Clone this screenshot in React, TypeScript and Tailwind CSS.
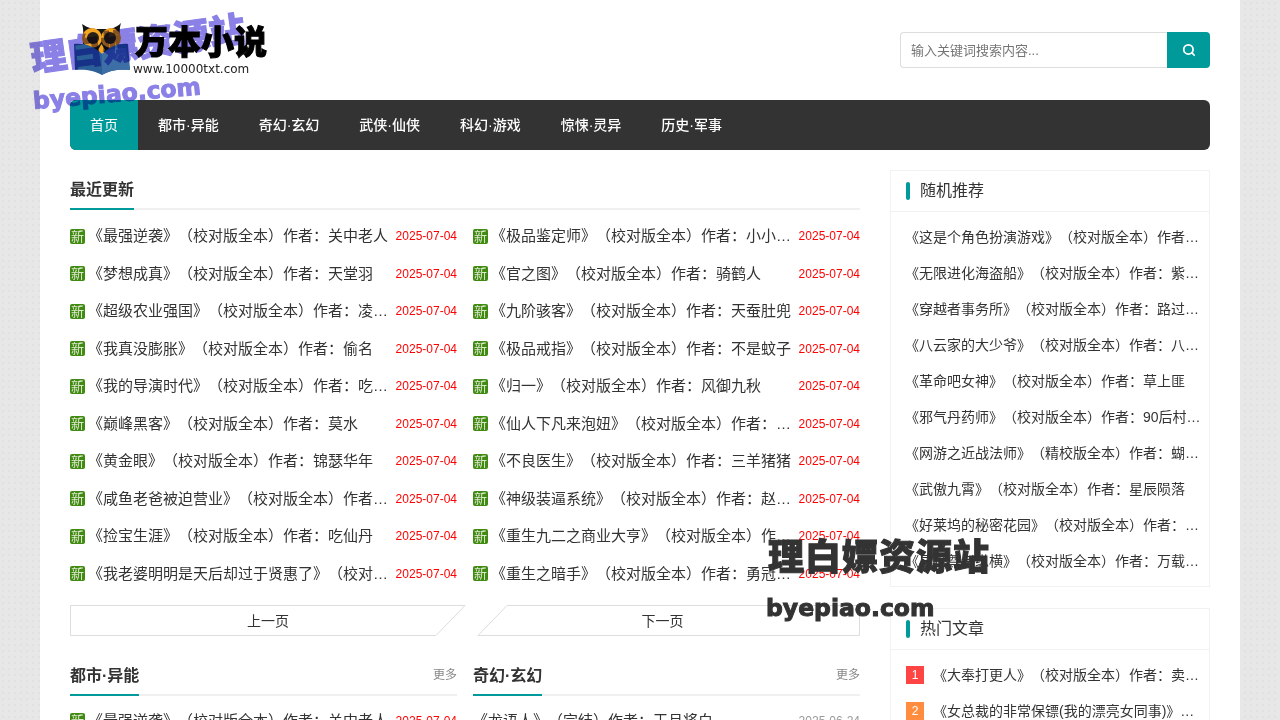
import React from 'react';
import { Search } from 'lucide-react';

const font = 'font-["Liberation_Sans","Noto_Sans_CJK_SC",sans-serif]';

const navItems = ['都市·异能', '奇幻·玄幻', '武侠·仙侠', '科幻·游戏', '惊悚·灵异', '历史·军事'];

const recent: [string, string][] = [
  ['《最强逆袭》（校对版全本）作者：关中老人', '《极品鉴定师》（校对版全本）作者：小小小小小'],
  ['《梦想成真》（校对版全本）作者：天堂羽', '《官之图》（校对版全本）作者：骑鹤人'],
  ['《超级农业强国》（校对版全本）作者：凌晨晨晨', '《九阶骇客》（校对版全本）作者：天蚕肚兜'],
  ['《我真没膨胀》（校对版全本）作者：偷名', '《极品戒指》（校对版全本）作者：不是蚊子'],
  ['《我的导演时代》（校对版全本）作者：吃吃吃吃', '《归一》（校对版全本）作者：风御九秋'],
  ['《巅峰黑客》（校对版全本）作者：莫水', '《仙人下凡来泡妞》（校对版全本）作者：作者名字'],
  ['《黄金眼》（校对版全本）作者：锦瑟华年', '《不良医生》（校对版全本）作者：三羊猪猪'],
  ['《咸鱼老爸被迫营业》（校对版全本）作者：作者名', '《神级装逼系统》（校对版全本）作者：赵赵赵赵'],
  ['《捡宝生涯》（校对版全本）作者：吃仙丹', '《重生九二之商业大亨》（校对版全本）作者：作者'],
  ['《我老婆明明是天后却过于贤惠了》（校对版全本）', '《重生之暗手》（校对版全本）作者：勇冠三军军'],
];

const random = [
  '《这是个角色扮演游戏》（校对版全本）作者：作者名',
  '《无限进化海盗船》（校对版全本）作者：紫色紫色紫色',
  '《穿越者事务所》（校对版全本）作者：路过路过路过',
  '《八云家的大少爷》（校对版全本）作者：八云八云',
  '《革命吧女神》（校对版全本）作者：草上匪',
  '《邪气丹药师》（校对版全本）作者：90后村长长长',
  '《网游之近战法师》（精校版全本）作者：蝴蝶蓝蓝蓝',
  '《武傲九霄》（校对版全本）作者：星辰陨落',
  '《好莱坞的秘密花园》（校对版全本）作者：作者名字',
  '《异世尊者纵横》（校对版全本）作者：万载万载万载',
];

const Dated = ({ text, date }: { text: string; date: string }) => (
  <li className="flex h-[37.5px] items-center">
    <span className="mr-[3px] flex h-[15px] w-[15px] shrink-0 items-center justify-center rounded-[2px] bg-[#3f8a10] text-[13px] leading-none text-[#dfe8d0]">
      新
    </span>
    <span className="min-w-0 flex-1 truncate text-[15px] text-[#333]">{text}</span>
    <span className="ml-[7px] shrink-0 text-xs text-[#f00]">{date}</span>
  </li>
);

const SectionTitle = ({ title, more }: { title: string; more?: boolean }) => (
  <div className="flex h-[40px] items-start justify-between border-b-2 border-[#f0f0f0]">
    <h3 className="-mb-[2px] h-[40px] border-b-2 border-[#009a9a] pt-[8px] text-base leading-[24px] font-bold text-[#333]">
      {title}
    </h3>
    {more && <span className="pt-[9px] text-xs leading-[20px] text-[#888]">更多</span>}
  </div>
);

const SideCard = ({ title, children }: { title: string; children: React.ReactNode }) => (
  <section className="border border-[#f2f2f2]">
    <div className="flex h-[41px] items-center border-b border-[#f2f2f2] pl-[15px]">
      <i className="mr-[10px] h-[18px] w-1 rounded-sm bg-[#009a9a]" />
      <h3 className="text-base text-[#333]">{title}</h3>
    </div>
    {children}
  </section>
);

const PageButton = ({ label, prev }: { label: string; prev?: boolean }) => (
  <a className={`relative flex h-[31px] items-center justify-center text-sm text-[#333] ${prev ? 'w-[396px]' : 'ml-[11px] w-[383px] pr-[12px]'}`}>
    <svg className="absolute inset-0 h-full w-full" fill="none">
      {prev ? (
        <polygon points="0.5,0.5 395,0.5 366,30.5 0.5,30.5" stroke="#ddd" />
      ) : (
        <polygon points="30,0.5 382.5,0.5 382.5,30.5 1,30.5" stroke="#ddd" />
      )}
    </svg>
    <span className="relative">{label}</span>
  </a>
);

const Logo = () => (
  <div className="relative h-[60px] w-[200px]">
    <svg className="absolute top-0 left-0" width="64" height="60" viewBox="0 0 64 60">
      <path d="M12 4 C18 8 22 9 27 9 L36 9 C41 9 46 8 51 3 C49 9 50 16 49 24 L38 32 L25 32 L13 24 C13 16 14 10 12 4Z" fill="#151515" />
      <circle cx="22" cy="18" r="10" fill="#f5a623" />
      <circle cx="41" cy="18" r="10" fill="#f5a623" />
      <circle cx="23" cy="18" r="6" fill="#2b2118" />
      <circle cx="40" cy="18" r="6" fill="#2b2118" />
      <polygon points="31.5,24 35,30 31.5,35 28,30" fill="#f5a623" />
      <path d="M4 24 C14 23 24 26 32 34 C40 26 50 23 58 24 L60 50 C48 49 40 50 32 55 C24 50 14 49 5 50Z" fill="#2a5f97" />
      <path d="M32 34 L32 55 C40 50 48 49 60 50 L56 28 C46 28 38 29 32 34Z" fill="#3d6fa6" />
    </svg>
    <span className="absolute top-[3px] left-[65px] text-[33px] leading-[40px] font-black whitespace-nowrap text-black [-webkit-text-stroke:1px_#000]">
      万本小说
    </span>
    <span className="absolute top-[41px] left-[63px] font-['DejaVu_Sans',sans-serif] text-[12px] leading-[16px] whitespace-nowrap text-[#222]">
      www.10000txt.com
    </span>
  </div>
);

export default function App() {
  return (
    <div className={`${font} relative h-screen overflow-hidden bg-[#e7e7e7] bg-[radial-gradient(#e1e1e1_1px,transparent_1px)] bg-[length:6px_6px] [text-spacing-trim:space-all]`}>
      <div className="mx-auto w-[1200px] bg-white px-[30px]">
        {/* Header */}
        <header className="flex h-[100px] items-start justify-between pt-[20px]">
          <Logo />
          <div className="mt-[12px] flex h-[36px] w-[310px]">
            <input
              readOnly
              placeholder="输入关键词搜索内容..."
              className="h-full min-w-0 flex-1 rounded-l border border-r-0 border-[#ddd] px-[10px] text-[13px] text-[#333] placeholder:text-[#757575]"
            />
            <button className="flex h-full w-[43px] items-center justify-center rounded-r bg-[#009a9a] text-white">
              <Search size={14} strokeWidth={3} />
            </button>
          </div>
        </header>

        {/* Nav */}
        <nav className="flex h-[50px] overflow-hidden rounded-md bg-[#333]">
          <a className="flex w-[68px] items-center justify-center bg-[#009a9a] text-sm text-white">首页</a>
          <ul className="flex pl-[20px]">
            {navItems.map((item) => (
              <li key={item} className="mr-[40px] flex items-center text-sm font-medium text-white">
                {item}
              </li>
            ))}
          </ul>
        </nav>

        <div className="mt-[20px] flex gap-[30px]">
          {/* Main column */}
          <main className="w-[790px] shrink-0">
            <SectionTitle title="最近更新" />
            <div className="mt-[7.5px] grid grid-cols-2 gap-x-[16px]">
              {recent.flat().map((text, i) => (
                <Dated key={i} text={text} date="2025-07-04" />
              ))}
            </div>
            <div className="mt-[12.5px] flex">
              <PageButton label="上一页" prev />
              <PageButton label="下一页" />
            </div>
            <div className="mt-[20px] grid grid-cols-2 gap-x-[16px]">
              <div>
                <SectionTitle title="都市·异能" more />
                <ul className="mt-[6px]">
                  <Dated text="《最强逆袭》（校对版全本）作者：关中老人" date="2025-07-04" />
                </ul>
              </div>
              <div>
                <SectionTitle title="奇幻·玄幻" more />
                <ul className="mt-[6px]">
                  <li className="flex h-[37.5px] items-center">
                    <span className="min-w-0 flex-1 truncate text-[15px] text-[#333]">《龙语人》（完结）作者：王月将白</span>
                    <span className="ml-[7px] shrink-0 text-xs text-[#999]">2025-06-24</span>
                  </li>
                </ul>
              </div>
            </div>
          </main>

          {/* Sidebar */}
          <aside className="flex w-[320px] shrink-0 flex-col gap-[21px]">
            <SideCard title="随机推荐">
              <ul className="py-[7px] pr-[7px] pl-[14px]">
                {random.map((text) => (
                  <li key={text} className="h-[36px] truncate text-sm leading-[36px] text-[#333]">
                    {text}
                  </li>
                ))}
              </ul>
            </SideCard>
            <SideCard title="热门文章">
              <ul className="py-[7px] pr-[7px] pl-[15px]">
                <li className="flex h-[36px] items-center">
                  <span className="mr-[9px] flex h-[18px] w-[18px] shrink-0 items-center justify-center bg-[#ff4444] text-xs text-white">1</span>
                  <span className="truncate text-sm text-[#333]">《大奉打更人》（校对版全本）作者：卖报小郎君</span>
                </li>
                <li className="flex h-[36px] items-center">
                  <span className="mr-[9px] flex h-[18px] w-[18px] shrink-0 items-center justify-center bg-[#ff8c3f] text-xs text-white">2</span>
                  <span className="truncate text-sm text-[#333]">《女总裁的非常保镖(我的漂亮女同事)》（校对版全本）</span>
                </li>
              </ul>
            </SideCard>
          </aside>
        </div>
      </div>

      {/* Watermarks */}
      <div className="pointer-events-none absolute top-[40px] left-[31px] origin-left -rotate-[8deg] text-[36px] leading-[40px] font-black whitespace-nowrap text-[#8a80e6] mix-blend-multiply [-webkit-text-stroke:1px_#8a80e6]">
        理白嫖资源站
      </div>
      <div className="pointer-events-none absolute top-[83px] left-[33px] origin-left -rotate-[5deg] font-['DejaVu_Sans',sans-serif] text-[23.5px] leading-[36px] font-bold whitespace-nowrap text-[#8a80e6] mix-blend-multiply [-webkit-text-stroke:1px_#8a80e6]">
        byepiao.com
      </div>
      <div className="pointer-events-none absolute top-[536px] left-[768px] text-[36px] leading-[44px] font-black tracking-[1px] whitespace-nowrap text-[#333] [-webkit-text-stroke:1px_#333]">
        理白嫖资源站
      </div>
      <div className="pointer-events-none absolute top-[590px] left-[766px] font-['DejaVu_Sans',sans-serif] text-[23.5px] leading-[36px] font-bold whitespace-nowrap text-[#333] [-webkit-text-stroke:1px_#333]">
        byepiao.com
      </div>
    </div>
  );
}
